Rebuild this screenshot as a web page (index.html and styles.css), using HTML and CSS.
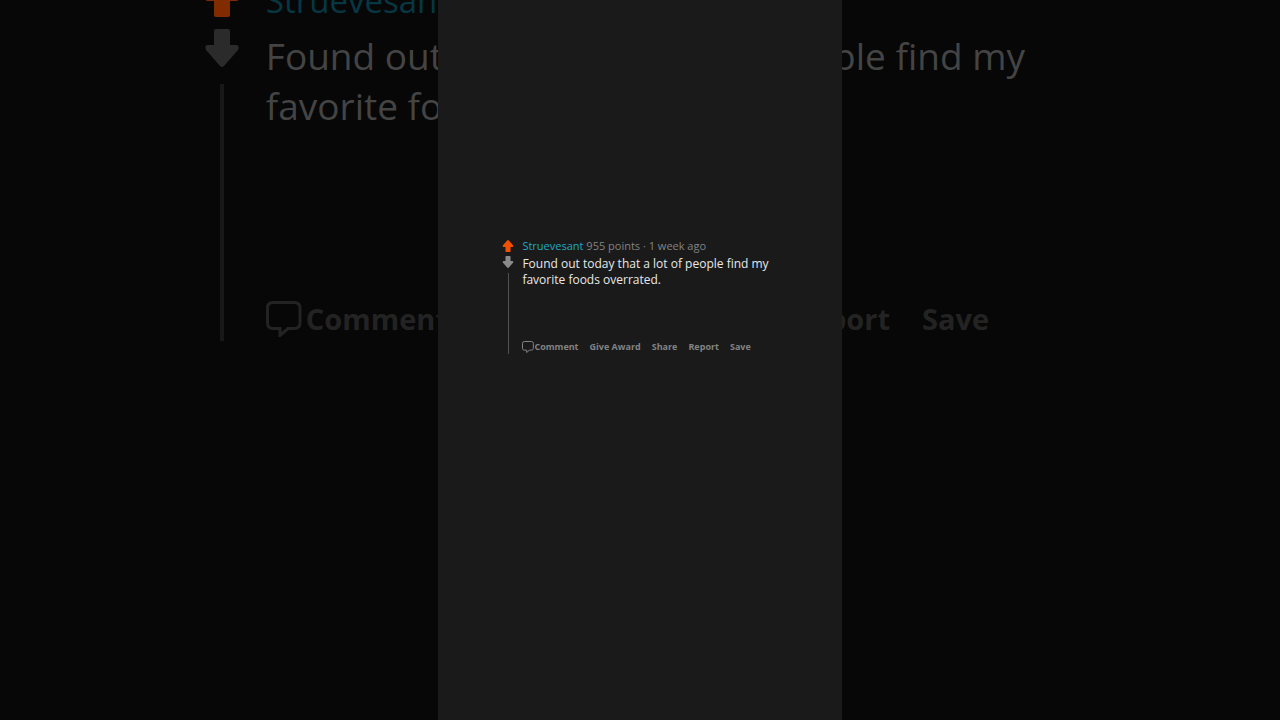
FILE: index.html
```
<!DOCTYPE html>
<html lang="en">
<head>
    <meta charset="UTF-8">
    <meta name="viewport" content="width=device-width, initial-scale=1.0">
    <title>Comment by Struevesant</title>
    <link rel="stylesheet" href="styles.css">
</head>
<body>
    <svg class="symbols" aria-hidden="true">
        <symbol id="arrow" viewBox="0 0 34 38">
            <path d="M15 1Q17 -1 19 1L33 17Q35 22 31 22H25V36Q25 38 23 38H11Q9 38 9 36V22H3Q-1 22 1 17Z" fill="currentColor"/>
        </symbol>
        <symbol id="bubble" viewBox="0 0 36 36">
            <path d="M7 1.5H28Q34 1.5 34 7V22Q34 27.500 28 27.500H22L14 34.500V27.500H7Q1.500 27.500 1.500 22V7Q1.500 1.500 7 1.500Z" fill="none" stroke="currentColor" stroke-width="3"/>
        </symbol>
    </svg>

    <!-- dimmed, enlarged copy behind the panel -->
    <div class="backdrop" aria-hidden="true">
        <article class="comment large">
            <div class="votes">
                <button class="vote up" tabindex="-1"><svg><use href="#arrow"/></svg></button>
                <button class="vote down" tabindex="-1"><svg><use href="#arrow"/></svg></button>
                <div class="thread-line"></div>
            </div>
            <div class="content">
                <div class="meta"><a href="#" class="author" tabindex="-1">Struevesant</a> 955 points · 1 week ago</div>
                <p class="text">Found out today that a lot of people find my favorite foods overrated.</p>
                <div class="actions">
                    <button tabindex="-1"><svg><use href="#bubble"/></svg>Comment</button>
                    <button tabindex="-1">Give Award</button>
                    <button tabindex="-1">Share</button>
                    <button tabindex="-1">Report</button>
                    <button tabindex="-1">Save</button>
                </div>
            </div>
        </article>
    </div>

    <main class="panel">
        <article class="comment">
            <div class="votes">
                <button class="vote up" aria-label="Upvote"><svg><use href="#arrow"/></svg></button>
                <button class="vote down" aria-label="Downvote"><svg><use href="#arrow"/></svg></button>
                <div class="thread-line"></div>
            </div>
            <div class="content">
                <div class="meta"><a href="#" class="author">Struevesant</a> 955 points · 1 week ago</div>
                <p class="text">Found out today that a lot of people find my favorite foods overrated.</p>
                <div class="actions">
                    <button><svg><use href="#bubble"/></svg>Comment</button>
                    <button>Give Award</button>
                    <button>Share</button>
                    <button>Report</button>
                    <button>Save</button>
                </div>
            </div>
        </article>
    </main>
</body>
</html>
```
FILE: styles.css
```
* {
    box-sizing: border-box;
}
body {
    margin: 0;
    min-height: 100vh;
    display: flex;
    justify-content: center;
    background-color: #070707;
    font-family: "Open Sans", "Noto Sans", sans-serif;
}
.symbols {
    position: absolute;
    width: 0;
    height: 0;
}
button {
    display: flex;
    align-items: center;
    padding: 0;
    border: none;
    background: none;
    color: inherit;
    font: inherit;
    cursor: pointer;
}
.backdrop {
    position: absolute;
    inset: 0;
    overflow: hidden;
    padding-left: 16%;
}
.panel {
    position: relative;
    width: 56vh;
    min-width: 380px;
    padding: 238px 64px 0;
    background-color: #1a1a1a;
}

/* comment */
.comment {
    --meta-size: 11px;
    --text-size: 12px;
    --action-size: 9px;
    --line: 16px;
    --icon: 12px;
    --icon-gap: 0px;
    --action-gap: 11px;
    display: flex;
    gap: 8px;
    line-height: var(--line);
    color: #818384;
}
.votes {
    display: flex;
    flex-direction: column;
    align-items: center;
    flex-shrink: 0;
    width: 12px;
    padding-top: 2px;
}
.vote svg {
    display: block;
    width: 12px;
    height: 12px;
}
.vote.up {
    color: #f05000;
}
.vote.down {
    margin: 4px 0 5px;
    color: #8a8a8a;
}
.vote.down svg {
    transform: rotate(180deg);
}
.thread-line {
    flex: 1;
    width: 1px;
    margin-bottom: 1px;
    background-color: #505050;
}
.content {
    flex: 1;
}
.meta {
    font-size: var(--meta-size);
    white-space: nowrap;
}
.author {
    color: #20a8c4;
    text-decoration: none;
}
.text {
    margin: 2px 0 51px;
    font-size: var(--text-size);
    color: #e8e8e8;
}
.actions {
    display: flex;
    gap: var(--action-gap);
    font-size: var(--action-size);
    font-weight: bold;
    white-space: nowrap;
}
.actions svg {
    width: var(--icon);
    height: var(--icon);
    margin-right: var(--icon-gap);
}

/* backdrop size */
.large {
    --meta-size: 33px;
    --text-size: 37px;
    --action-size: 29px;
    --line: 50px;
    --icon: 36px;
    --icon-gap: 4px;
    --action-gap: 32px;
    gap: 27px;
    max-width: 860px;
    margin-top: -24px;
    color: #232323;
}
.large .votes {
    width: 34px;
    padding-top: 3px;
}
.large .vote svg {
    width: 34px;
    height: 38px;
}
.large .vote.up {
    color: #802b00;
}
.large .vote.down {
    margin: 12px 0 17px;
    color: #2b2b2b;
}
.large .thread-line {
    width: 4px;
    margin-bottom: 3px;
    background-color: #181818;
}
.large .author {
    color: #063743;
}
.large .text {
    margin: 5px 0 163px;
    color: #444444;
}
```
